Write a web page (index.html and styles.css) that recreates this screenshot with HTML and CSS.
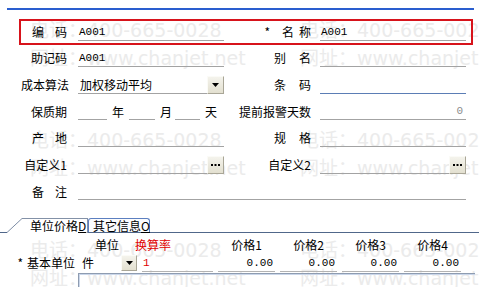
FILE: index.html
```html
<!DOCTYPE html>
<html lang="zh-CN">
<head>
    <meta charset="UTF-8">
    <title>存货档案</title>
    <link rel="stylesheet" href="styles.css">
</head>
<body>
<div class="page">
    <!-- faint watermark tiles behind the form -->
    <div class="watermark">
        <div class="wm"><div>电话：400-665-0028</div><div>网址：www.chanjet.net</div></div>
        <div class="wm"><div>电话：400-665-0028</div><div>网址：www.chanjet.net</div></div>
        <div class="wm"><div>电话：400-665-0028</div><div>网址：www.chanjet.net</div></div>
        <div class="wm"><div>电话：400-665-0028</div><div>网址：www.chanjet.net</div></div>
        <div class="wm"><div>电话：400-665-0028</div><div>网址：www.chanjet.net</div></div>
        <div class="wm"><div>电话：400-665-0028</div><div>网址：www.chanjet.net</div></div>
    </div>

    <div class="content">
        <div class="titlebar"></div>

        <div class="form">
            <div class="row key">
                <div class="lbl"><span class="spread">编码</span></div>
                <div class="field mono">A001</div>
                <div class="lbl r"><span class="star">*</span><span class="spread-s">名称</span></div>
                <div class="field mono">A001</div>
            </div>

            <div class="row">
                <div class="lbl">助记码</div>
                <div class="field mono">A001</div>
                <div class="lbl r"><span class="spread-r">别名</span></div>
                <div class="field"></div>
            </div>

            <div class="row">
                <div class="lbl">成本算法</div>
                <div class="field combo">
                    <span class="combo-text">加权移动平均</span>
                    <span class="btn"><svg width="7" height="4" viewBox="0 0 7 4"><polygon points="0,0 7,0 3.5,4" fill="#000"/></svg></span>
                </div>
                <div class="lbl r"><span class="spread-r">条码</span></div>
                <div class="field focus"></div>
            </div>

            <div class="row">
                <div class="lbl">保质期</div>
                <div class="period">
                    <span class="short w29"></span><span class="unit u-year">年</span>
                    <span class="short w26"></span><span class="unit u-month">月</span>
                    <span class="short w25"></span><span class="unit u-day">天</span>
                </div>
                <div class="lbl r">提前报警天数</div>
                <div class="field mono num">0</div>
            </div>

            <div class="row">
                <div class="lbl"><span class="spread">产地</span></div>
                <div class="field"></div>
                <div class="lbl r"><span class="spread-r">规格</span></div>
                <div class="field"></div>
            </div>

            <div class="row">
                <div class="lbl">自定义1</div>
                <div class="field combo">
                    <span class="combo-text"></span>
                    <span class="btn"><svg width="9" height="2" viewBox="0 0 9 2"><rect x="0" y="0" width="2" height="2" fill="#000"/><rect x="3.5" y="0" width="2" height="2" fill="#000"/><rect x="7" y="0" width="2" height="2" fill="#000"/></svg></span>
                </div>
                <div class="lbl r">自定义2</div>
                <div class="field combo">
                    <span class="combo-text"></span>
                    <span class="btn"><svg width="9" height="2" viewBox="0 0 9 2"><rect x="0" y="0" width="2" height="2" fill="#000"/><rect x="3.5" y="0" width="2" height="2" fill="#000"/><rect x="7" y="0" width="2" height="2" fill="#000"/></svg></span>
                </div>
            </div>

            <div class="row">
                <div class="lbl"><span class="spread">备注</span></div>
                <div class="field wide"></div>
            </div>
        </div>

        <!-- tab strip -->
        <div class="tabs">
            <span class="tab-lead"></span>
            <svg class="slant" width="15" height="15" viewBox="0 0 15 15"><rect width="15" height="15" fill="#fff"/><line x1="0" y1="14.5" x2="15" y2="0.5" stroke="#7d8da5" stroke-width="1"/></svg>
            <span class="tab active">单位价格<u>D</u></span>
            <span class="tab other">其它信息<u>O</u></span>
        </div>

        <div class="price-grid head">
            <div></div>
            <div class="h-unit">单位</div>
            <div class="h-rate">换算率</div>
            <div class="h-price">价格1</div>
            <div class="h-price">价格2</div>
            <div class="h-price">价格3</div>
            <div class="h-price">价格4</div>
        </div>
        <div class="price-grid data">
            <div class="unit-name"><span class="star-b">*</span>基本单位</div>
            <div class="unit-pick">
                <span>件</span>
                <span class="btn small"><svg width="7" height="4" viewBox="0 0 7 4"><polygon points="0,0 7,0 3.5,4" fill="#000"/></svg></span>
            </div>
            <div class="cell mono rate">1</div>
            <div class="cell mono num">0.00</div>
            <div class="cell mono num">0.00</div>
            <div class="cell mono num">0.00</div>
            <div class="cell mono num">0.00</div>
        </div>
        <div class="grid-box"></div>
    </div>
</div>
</body>
</html>
```

FILE: styles.css
```css
body {
    margin: 0;
    background: #fff;
    font-family: "Noto Sans CJK SC", "Liberation Sans", sans-serif;
    font-size: 12px;
    color: #000;
}
.page {
    position: relative;
    width: 479px;
    height: 287px;
    overflow: hidden;
    background: #fff;
}

/* watermark */
.watermark {
    position: absolute;
    top: 16px;
    left: 30px;
    display: grid;
    grid-template-columns: 270px 270px;
    grid-auto-rows: 110px;
    font-family: "DejaVu Sans", "Noto Sans CJK SC", sans-serif;
    font-size: 19px;
    line-height: 28px;
    color: #ebebeb;
    white-space: nowrap;
    z-index: 0;
}
.content {
    position: relative;
    z-index: 1;
}

.titlebar {
    margin: 8px 5px 0 7px;
    height: 2px;
    background: #2a5ecf;
}

.form {
    margin: 9px 0 0 19px;
    width: 454px;
}
.row {
    display: grid;
    grid-template-columns: 57px 146px 96px 146px;
    align-items: center;
    height: 26.7px;
    padding: 0 2px;
}
.row.key {
    height: 22px;
    padding: 0;
    border: 2px solid #d7131b;
}
.lbl {
    text-align: right;
    padding-right: 11px;
    white-space: nowrap;
    line-height: 16px;
}
.lbl.r {
    padding-right: 9px;
}
.spread {
    letter-spacing: 11px;
    margin-right: -11px;
}
.spread-r {
    letter-spacing: 13px;
    margin-right: -13px;
}
.spread-s {
    letter-spacing: 5px;
    margin-right: -5px;
}
.star {
    margin-right: 12px;
}

.field {
    height: 16px;
    border-bottom: 1px solid #a3a3a3;
    display: flex;
    align-items: center;
    padding-left: 1px;
}
.field.focus {
    border-bottom-color: #5b7db5;
}
.field.wide {
    grid-column: 2 / 5;
}
.mono {
    font-family: "Liberation Mono", "DejaVu Sans Mono", monospace;
    font-size: 11px;
}
.num {
    justify-content: flex-end;
    padding-right: 2px;
    color: #000;
}
.field.num {
    color: #8c8c8c;
    padding-right: 3px;
}

.combo {
    padding-left: 2px;
}
.combo-text {
    flex: 1;
}
.btn {
    box-sizing: border-box;
    width: 17px;
    height: 18px;
    margin-bottom: 0;
    display: flex;
    align-items: center;
    justify-content: center;
    background: linear-gradient(#f4f3ec, #e3e0d0);
    border: 1px solid;
    border-color: #fbfbf7 #a9a697 #a9a697 #fbfbf7;
    align-self: flex-end;
}
.combo .btn {
    margin-bottom: 0;
    position: relative;
    top: 1px;
}

.period {
    display: flex;
    align-items: flex-end;
    height: 17px;
}
.short {
    display: block;
    height: 16px;
    border-bottom: 1px solid #a3a3a3;
}
.w29 { width: 29px; }
.w26 { width: 26px; }
.w25 { width: 25px; }
.unit {
    line-height: 16px;
    align-self: center;
}
.u-year { margin: 0 5px 0 5px; }
.u-month { margin: 0 3px 0 5px; }
.u-day { margin-left: 5px; }

/* tabs */
.tabs {
    display: flex;
    align-items: flex-end;
    height: 14px;
    margin-top: 13px;
    border-bottom: 1px solid #50678a;
}
.tab-lead {
    width: 7px;
}
.slant {
    display: block;
    margin-bottom: -1px;
}
.tab {
    box-sizing: border-box;
    height: 14px;
    line-height: 13px;
    white-space: nowrap;
}
.tab.active {
    width: 66px;
    height: 15px;
    padding-left: 8px;
    margin-bottom: -1px;
    border-top: 1px solid #8391a7;
    border-right: 1px solid #8391a7;
    background: #fff;
}
.tab.other {
    width: 62px;
    padding-left: 4px;
    border: 1px solid #5c7fc0;
    border-bottom: none;
    border-radius: 3px 3px 0 0;
    background: #fbfcfe;
}
u {
    text-decoration: underline;
}

/* unit price grid */
.price-grid {
    display: grid;
    grid-template-columns: 77px 55px 71px 57px 57px 57px 57px;
    column-gap: 5px;
}
.price-grid.head {
    height: 22px;
    align-items: center;
}
.h-unit {
    padding-left: 13px;
}
.h-rate {
    color: #e00000;
    margin-left: -7px;
}
.h-price {
    text-align: center;
}
.price-grid.data {
    height: 17px;
}
.unit-name {
    text-align: right;
    padding-right: 2px;
    line-height: 16px;
    white-space: nowrap;
}
.star-b {
    margin-right: 4px;
}
.unit-pick {
    display: flex;
    justify-content: space-between;
    line-height: 16px;
}
.btn.small {
    width: 16px;
    height: 16px;
    margin-bottom: 1px;
}
.cell {
    display: flex;
    align-items: center;
    height: 16px;
    border-bottom: 1px solid #b3b3b3;
}
.cell.rate {
    color: #e00000;
    padding-left: 1px;
}
.grid-box {
    margin: 1px 4px 0 78px;
    height: 20px;
    border-top: 1px solid #8e9cb1;
    border-left: 1px solid #8e9cb1;
    box-shadow: inset 1px 1px 0 #cbd7ea;
}
```
